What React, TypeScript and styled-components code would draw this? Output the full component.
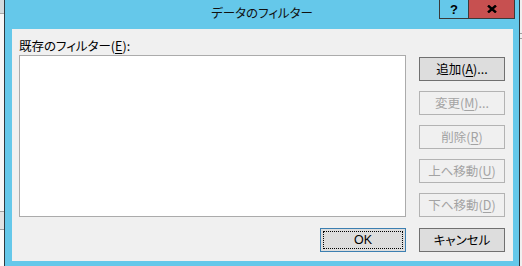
import styled, { createGlobalStyle } from 'styled-components';

const GlobalStyle = createGlobalStyle`
    html, body {
        margin: 0;
        padding: 0;
        background: #f0f0f0;
    }
    body {
        font-family: "Noto Sans CJK JP", "Noto Sans", sans-serif;
    }
`;

const FRAME = '#65c8ea';

export default function App() {
    return (
        <>
            <GlobalStyle />
            <Screen>
                <LeftStrip />
                <Window>
                    <TitleBar>
                        <span />
                        <Title>データのフィルター</Title>
                        <Caption>
                            <HelpButton>?</HelpButton>
                            <CloseButton>
                                <svg width="10" height="8" viewBox="0 0 10 8">
                                    <path d="M1 0.5 L9 7.5 M9 0.5 L1 7.5" stroke="#000" strokeWidth="2.4" fill="none" />
                                </svg>
                            </CloseButton>
                        </Caption>
                    </TitleBar>

                    <Client>
                        <Main>
                            <LeftColumn>
                                <Label>既存のフィルター(<u>E</u>):</Label>
                                <ListBox />
                            </LeftColumn>
                            <ButtonColumn>
                                <Button>追加(<u>A</u>)...</Button>
                                <Button disabled>変更(<u>M</u>)...</Button>
                                <Button disabled>削除(<u>R</u>)</Button>
                                <Button disabled>上へ移動(<u>U</u>)</Button>
                                <Button disabled>下へ移動(<u>D</u>)</Button>
                            </ButtonColumn>
                        </Main>
                        <Footer>
                            <DefaultButton><Focus>OK</Focus></DefaultButton>
                            <Button>キャンセル</Button>
                        </Footer>
                    </Client>
                </Window>
                <RightStrip />
            </Screen>
        </>
    );
}

const Screen = styled.div`
    display: flex;
    width: 522px;
    height: 266px;
    overflow: hidden;
`;

const LeftStrip = styled.div`
    width: 4px;
    flex-shrink: 0;
    background: linear-gradient(
        to bottom,
        #d3dadd 0px, #d3dadd 13px,
        #a9a9a9 13px, #a9a9a9 14px,
        #f7f7f7 14px, #f7f7f7 211px,
        #a0a0a0 211px, #a0a0a0 212px,
        #e3e3e3 212px, #e3e3e3 229px,
        #a0a0a0 229px, #a0a0a0 230px,
        #fbfbfb 230px
    );
`;

const RightStrip = styled.div`
    width: 2px;
    flex-shrink: 0;
    background: linear-gradient(
        to bottom,
        #f0f0f0 0px, #f0f0f0 33px,
        #a0a0a0 33px, #a0a0a0 34px,
        #f0f0f0 34px, #f0f0f0 38px,
        #a0a0a0 38px, #a0a0a0 39px,
        #f0f0f0 39px
    );
`;

const Window = styled.div`
    width: 516px;
    height: 276px;
    box-sizing: border-box;
    flex-shrink: 0;
    background: ${FRAME};
    border-left: 1px solid #2e3a40;
    border-right: 1px solid #2e3a40;
    padding: 0 6px 10px 7px;
    display: flex;
    flex-direction: column;
`;

const TitleBar = styled.div`
    height: 29px;
    margin: 0 -6px 0 -7px;
    display: grid;
    grid-template-columns: 1fr auto 1fr;
    align-items: start;
`;

const Title = styled.div`
    font-size: 12.5px;
    line-height: 19px;
    padding-top: 3px;
    color: #111;
    font-feature-settings: "palt";
    white-space: nowrap;
`;

const Caption = styled.div`
    display: flex;
    justify-content: flex-end;
    padding-right: 4px;
`;

const CaptionButton = styled.div`
    height: 19px;
    box-sizing: border-box;
    border: 1px solid #3a3a3a;
    border-top: none;
    display: flex;
    align-items: center;
    justify-content: center;
`;

const HelpButton = styled(CaptionButton)`
    width: 29px;
    background: ${FRAME};
    border-right: none;
    font-family: "Liberation Sans", Arial, sans-serif;
    font-weight: bold;
    font-size: 13px;
    color: #000;
`;

const CloseButton = styled(CaptionButton)`
    width: 47px;
    background: #c75050;
`;

const Client = styled.div`
    width: 501px;
    height: 232px;
    box-sizing: border-box;
    background: #f0f0f0;
    padding: 0 8px 9px 7px;
    display: flex;
    flex-direction: column;
`;

const Main = styled.div`
    display: flex;
    gap: 13px;
`;

const LeftColumn = styled.div`
    width: 387px;
    display: flex;
    flex-direction: column;
`;

const Label = styled.div`
    font-size: 12.5px;
    line-height: 16px;
    padding-top: 9px;
    margin-bottom: 1px;
    color: #000;
    font-feature-settings: "palt";
    white-space: nowrap;

    u {
        text-underline-offset: 2px;
    }
`;

const ListBox = styled.div`
    height: 162px;
    box-sizing: border-box;
    background: #fff;
    border: 1px solid #ababab;
`;

const ButtonColumn = styled.div`
    display: flex;
    flex-direction: column;
    gap: 10px;
    padding-top: 28px;
`;

const Button = styled.button`
    width: 86px;
    height: 24px;
    box-sizing: border-box;
    padding: 0;
    margin: 0;
    font-family: "Noto Sans CJK JP", "Noto Sans", sans-serif;
    font-size: 12.5px;
    font-feature-settings: "palt";
    line-height: 16px;
    color: #000;
    background: #dddddd;
    border: 1px solid #707070;
    border-radius: 0;
    display: flex;
    align-items: center;
    justify-content: center;

    &:disabled {
        color: #a3a3a3;
        background: #f0f0f0;
        border-color: #b3b3b3;
    }

    u {
        text-underline-offset: 2px;
    }
`;

const DefaultButton = styled(Button)`
    border-color: #3c7fb1;
    padding: 2px;
`;

const Focus = styled.span`
    flex: 1;
    align-self: stretch;
    border: 1px dotted #000;
    display: flex;
    align-items: center;
    justify-content: center;
    font-family: "Liberation Sans", Arial, sans-serif;
`;

const Footer = styled.div`
    margin-top: 11px;
    display: flex;
    justify-content: flex-end;
    gap: 13px;
`;
